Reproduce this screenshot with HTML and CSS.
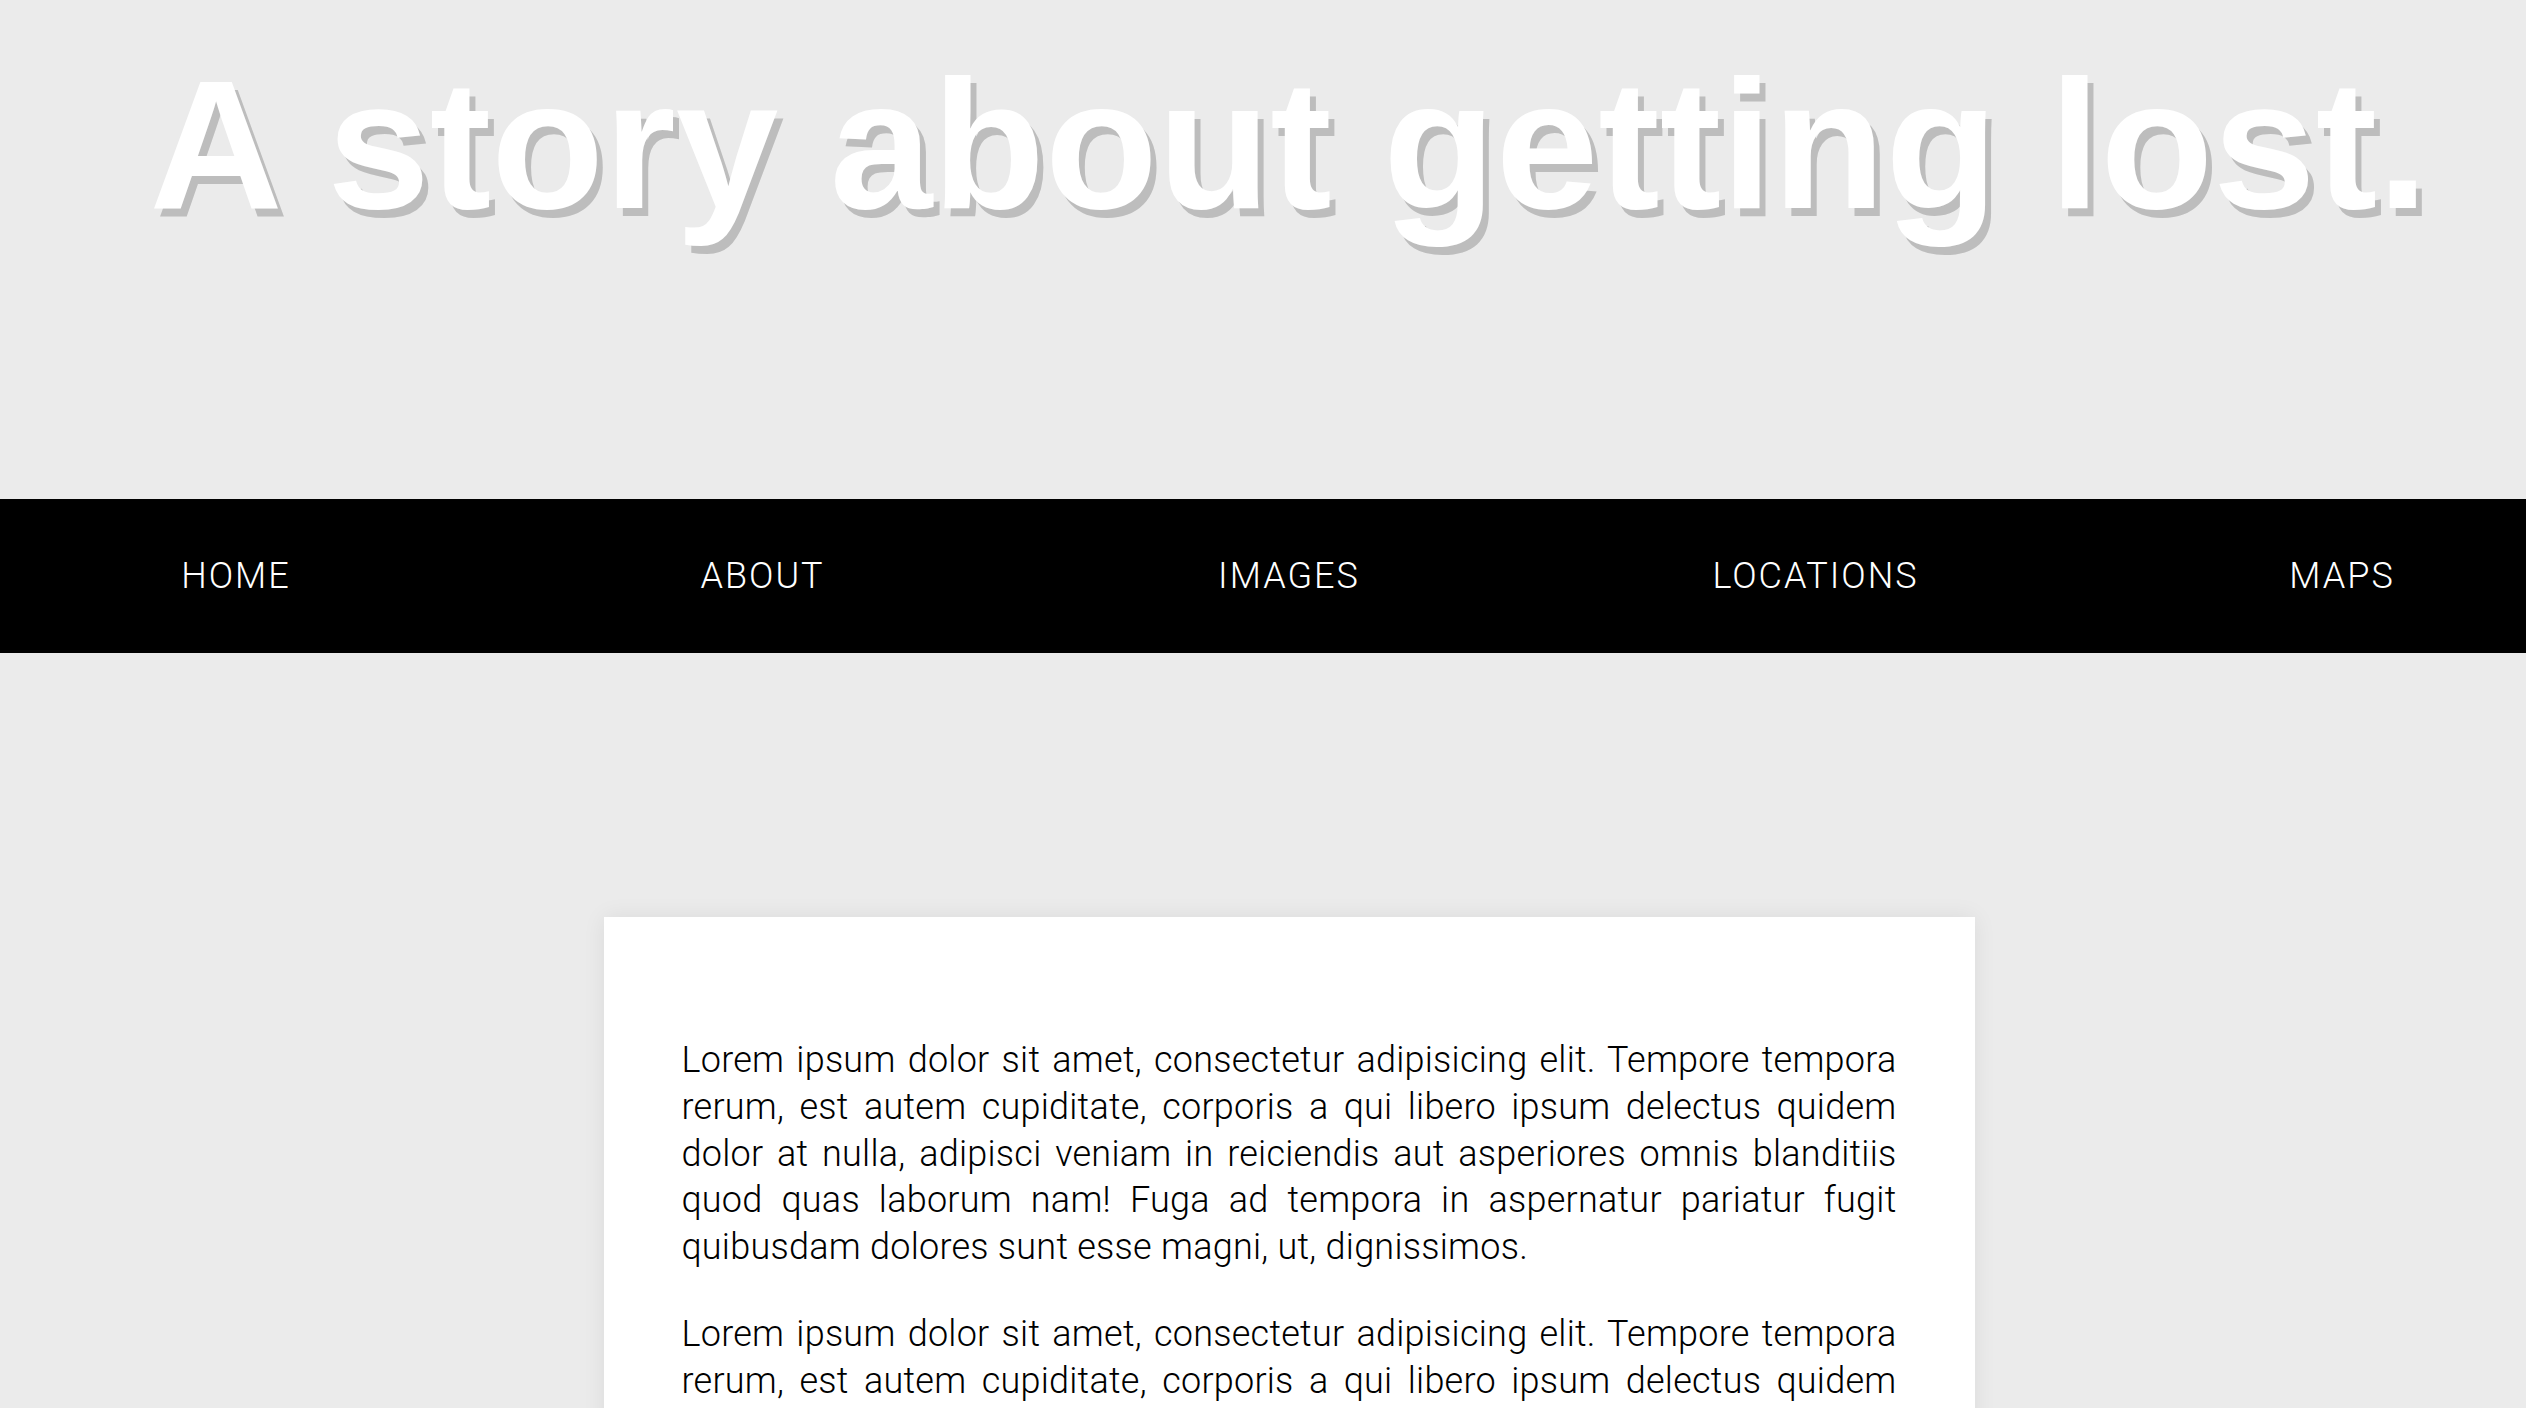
FILE: index.html
```html
<!DOCTYPE html>
<html lang="en">
<head>
<meta charset="utf-8">
<title>A story about getting lost.</title>
<link rel="stylesheet" href="styles.css">
</head>
<body>
<header class="hero">
  <h1 class="hero-title">A story about getting lost.</h1>
</header>
<nav class="menu">
  <ul class="menu-list">
    <li class="menu-item"><a class="menu-link" href="#">HOME</a></li>
    <li class="menu-item"><a class="menu-link" href="#">ABOUT</a></li>
    <li class="menu-item"><a class="menu-link" href="#">IMAGES</a></li>
    <li class="menu-item"><a class="menu-link" href="#">LOCATIONS</a></li>
    <li class="menu-item"><a class="menu-link" href="#">MAPS</a></li>
  </ul>
</nav>
<main class="content">
  <article class="card">
    <p class="card-text">Lorem ipsum dolor sit amet, consectetur adipisicing elit. Tempore tempora rerum, est autem cupiditate, corporis a qui libero ipsum delectus quidem dolor at nulla, adipisci veniam in reiciendis aut asperiores omnis blanditiis quod quas laborum nam! Fuga ad tempora in aspernatur pariatur fugit quibusdam dolores sunt esse magni, ut, dignissimos.</p>
    <p class="card-text">Lorem ipsum dolor sit amet, consectetur adipisicing elit. Tempore tempora rerum, est autem cupiditate, corporis a qui libero ipsum delectus quidem dolor at nulla, adipisci veniam in reiciendis aut asperiores omnis blanditiis quod quas laborum nam! Fuga ad tempora in aspernatur pariatur fugit quibusdam dolores sunt esse magni, ut, dignissimos.</p>
    <p class="card-text">Lorem ipsum dolor sit amet, consectetur adipisicing elit. Tempore tempora rerum, est autem cupiditate, corporis a qui libero ipsum delectus quidem dolor at nulla, adipisci veniam in reiciendis aut asperiores omnis blanditiis quod quas laborum nam! Fuga ad tempora in aspernatur pariatur fugit quibusdam dolores sunt esse magni, ut, dignissimos.</p>
  </article>
</main>
</body>
</html>
```
FILE: styles.css
```css
html, body {
  margin: 0;
  padding: 0;
}

body {
  background: #ebebeb;
  overflow-x: hidden;
  font-family: Roboto, "Liberation Sans", sans-serif;
  color: #000;
}

.hero {
  height: 499px;
  box-sizing: border-box;
  padding: 52px 0 0 52px;
  text-align: center;
}

.hero-title {
  margin: 0;
  font-family: "Liberation Sans", Arial, sans-serif;
  font-weight: 700;
  font-size: 184.5px;
  line-height: 1;
  color: #fff;
  white-space: nowrap;
  text-shadow: 6px 8px 0 #bdbdbd;
}

.menu {
  height: 154px;
  background: #000;
  display: flex;
  justify-content: center;
  align-items: center;
  padding-left: 52px;
}

.menu-list {
  flex-shrink: 0;
  display: grid;
  grid-template-columns: repeat(5, 526.5px);
  list-style: none;
  margin: 0;
  padding: 0;
}

.menu-item {
  text-align: center;
}

.menu-link {
  color: #fff;
  text-decoration: none;
  font-family: Roboto, "Liberation Sans", sans-serif;
  font-weight: 300;
  font-size: 36px;
  letter-spacing: 2px;
}

.content {
  display: flex;
  justify-content: center;
  padding: 264px 0 0 52px;
}

.card {
  width: 1371px;
  box-sizing: border-box;
  padding: 120px 78px 80px;
  background: #fff;
  box-shadow: 0 0 22px rgba(0, 0, 0, 0.07);
}

.card-text {
  margin: 0 0 40px;
  font-family: Roboto, "Liberation Sans", sans-serif;
  font-weight: 300;
  font-size: 36px;
  line-height: 46.8px;
  letter-spacing: 0.25px;
  text-align: justify;
}
```
